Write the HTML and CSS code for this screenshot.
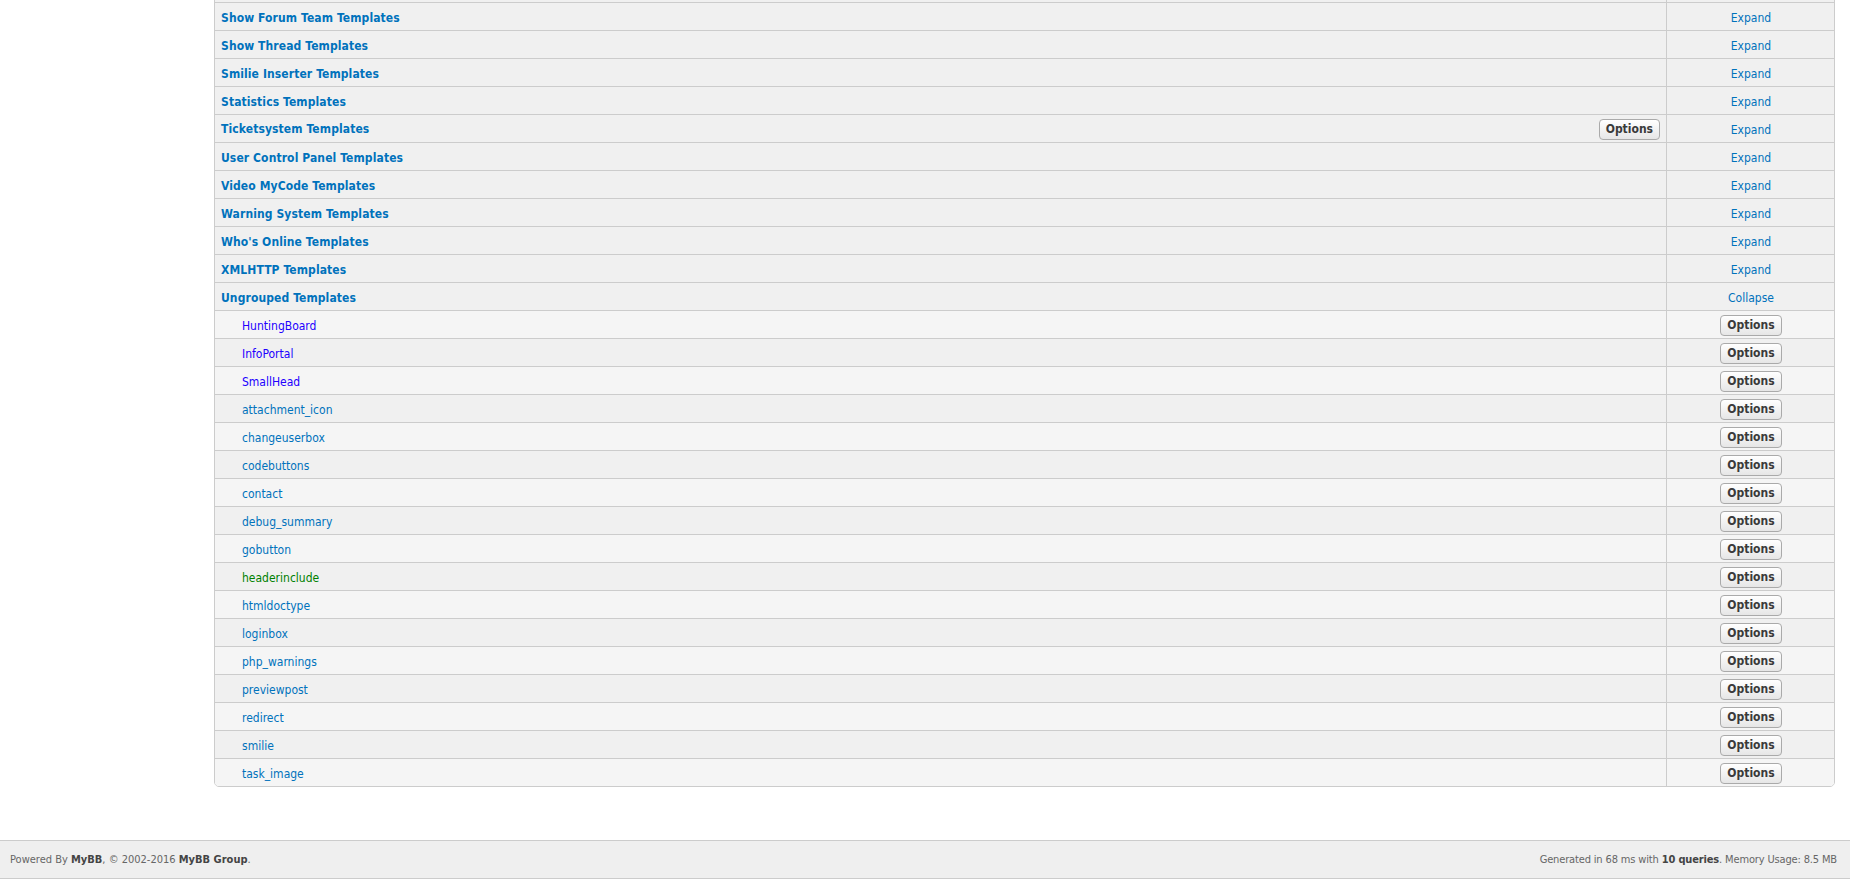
FILE: index.html
```html
<!DOCTYPE html>
<html lang="en">
<head>
<meta charset="UTF-8">
<title>Templates</title>
<link rel="stylesheet" href="styles.css">
</head>
<body>
<div class="page">
<div class="menu"></div>
<div class="content">
<div class="border_wrapper">
<table class="general">
	<tr class="group"><td><a href="#">Send Thread Templates</a></td><td class="ctrl"><a href="#">Expand</a></td></tr>
	<tr class="group"><td><a href="#">Show Forum Team Templates</a></td><td class="ctrl"><a href="#">Expand</a></td></tr>
	<tr class="group"><td><a href="#">Show Thread Templates</a></td><td class="ctrl"><a href="#">Expand</a></td></tr>
	<tr class="group"><td><a href="#">Smilie Inserter Templates</a></td><td class="ctrl"><a href="#">Expand</a></td></tr>
	<tr class="group"><td><a href="#">Statistics Templates</a></td><td class="ctrl"><a href="#">Expand</a></td></tr>
	<tr class="group"><td><div class="split"><a href="#">Ticketsystem Templates</a><button>Options</button></div></td><td class="ctrl"><a href="#">Expand</a></td></tr>
	<tr class="group"><td><a href="#">User Control Panel Templates</a></td><td class="ctrl"><a href="#">Expand</a></td></tr>
	<tr class="group"><td><a href="#">Video MyCode Templates</a></td><td class="ctrl"><a href="#">Expand</a></td></tr>
	<tr class="group"><td><a href="#">Warning System Templates</a></td><td class="ctrl"><a href="#">Expand</a></td></tr>
	<tr class="group"><td><a href="#">Who's Online Templates</a></td><td class="ctrl"><a href="#">Expand</a></td></tr>
	<tr class="group"><td><a href="#">XMLHTTP Templates</a></td><td class="ctrl"><a href="#">Expand</a></td></tr>
	<tr class="group"><td><a href="#">Ungrouped Templates</a></td><td class="ctrl"><a href="#">Collapse</a></td></tr>
	<tr class="tpl"><td><a class="custom" href="#">HuntingBoard</a></td><td class="ctrl"><button>Options</button></td></tr>
	<tr class="tpl alt"><td><a class="custom" href="#">InfoPortal</a></td><td class="ctrl"><button>Options</button></td></tr>
	<tr class="tpl"><td><a class="custom" href="#">SmallHead</a></td><td class="ctrl"><button>Options</button></td></tr>
	<tr class="tpl alt"><td><a href="#">attachment_icon</a></td><td class="ctrl"><button>Options</button></td></tr>
	<tr class="tpl"><td><a href="#">changeuserbox</a></td><td class="ctrl"><button>Options</button></td></tr>
	<tr class="tpl alt"><td><a href="#">codebuttons</a></td><td class="ctrl"><button>Options</button></td></tr>
	<tr class="tpl"><td><a href="#">contact</a></td><td class="ctrl"><button>Options</button></td></tr>
	<tr class="tpl alt"><td><a href="#">debug_summary</a></td><td class="ctrl"><button>Options</button></td></tr>
	<tr class="tpl"><td><a href="#">gobutton</a></td><td class="ctrl"><button>Options</button></td></tr>
	<tr class="tpl alt"><td><a class="modified" href="#">headerinclude</a></td><td class="ctrl"><button>Options</button></td></tr>
	<tr class="tpl"><td><a href="#">htmldoctype</a></td><td class="ctrl"><button>Options</button></td></tr>
	<tr class="tpl alt"><td><a href="#">loginbox</a></td><td class="ctrl"><button>Options</button></td></tr>
	<tr class="tpl"><td><a href="#">php_warnings</a></td><td class="ctrl"><button>Options</button></td></tr>
	<tr class="tpl alt"><td><a href="#">previewpost</a></td><td class="ctrl"><button>Options</button></td></tr>
	<tr class="tpl"><td><a href="#">redirect</a></td><td class="ctrl"><button>Options</button></td></tr>
	<tr class="tpl alt"><td><a href="#">smilie</a></td><td class="ctrl"><button>Options</button></td></tr>
	<tr class="tpl"><td><a href="#">task_image</a></td><td class="ctrl"><button>Options</button></td></tr>
</table>
</div>
</div>
</div>
<div id="footer">
	<p class="powered">Powered By <b>MyBB</b>, &copy; 2002-2016 <b>MyBB Group</b>.</p>
	<p class="generation">Generated in 68 ms with <b>10 queries</b>. Memory Usage: 8.5 MB</p>
</div>
</body>
</html>
```
FILE: styles.css
```css
html, body {margin:0; padding:0; background:#fff; color:#333; font-family:"DejaVu Sans Condensed", "DejaVu Sans", Verdana, sans-serif; font-size:12px;}
a {color:#0072bc; text-decoration:none;}

.page {display:flex; margin-top:-26px;}
.menu {flex:none; width:214px;}
.content {flex:1; margin:0 15px 53px 0;}

.border_wrapper {border:1px solid #ccc; border-radius:5px; overflow:hidden;}
table.general {width:100%; border-collapse:separate; border-spacing:0;}
table.general td {height:25px; padding:2px 6px 0; vertical-align:middle; border-bottom:1px solid #ccc; background:#f0f0f0;}
table.general tr:last-child td {border-bottom:0;}
table.general td.ctrl {width:154px; text-align:center; border-left:1px solid #ccc; padding-left:7px;}

tr.group td:first-child a {font-weight:bold; letter-spacing:0.1px;}
tr.tpl td {background:#f5f5f5;}
tr.tpl.alt td {background:#f0f0f0;}
tr.tpl td:first-child {padding-left:27px;}
a.custom {color:#2200ff;}
a.modified {color:#008000;}

.split {display:flex; justify-content:space-between; align-items:center; margin-top:-1px;}
td.ctrl button {margin-top:-1px;}

button {height:21px; padding:0 6px; font-family:inherit; font-size:12px; font-weight:bold; color:#3a3a3a; background:linear-gradient(#fff, #e6e6e6); border:1px solid #aaa; border-radius:4px;}

#footer {display:flex; justify-content:space-between; align-items:center; height:37px; padding:0 13px 0 10px; background:#efefef; border-top:1px solid #ccc; border-bottom:1px solid #ccc; color:#666; font-size:11px;}
#footer p {margin:0;}
#footer b {color:#444;}
#footer .generation {letter-spacing:-0.15px;}
```
